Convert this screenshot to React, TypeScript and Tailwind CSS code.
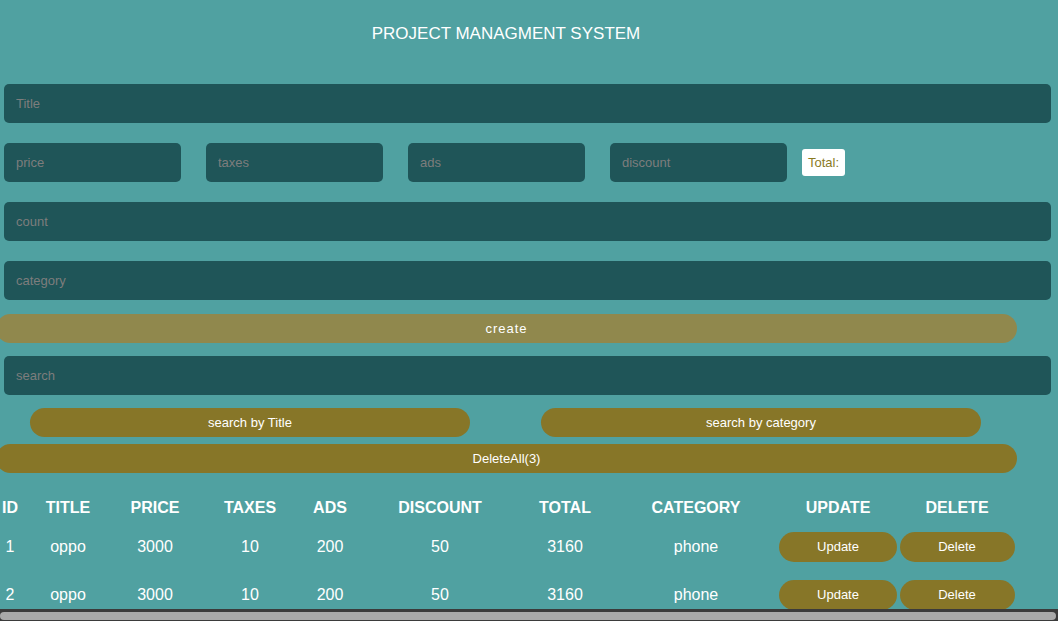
import React from "react";

const rows = [
  { id: 1, title: "oppo", price: 3000, taxes: 10, ads: 200, discount: 50, total: 3160, category: "phone" },
  { id: 2, title: "oppo", price: 3000, taxes: 10, ads: 200, discount: 50, total: 3160, category: "phone" },
];

const cols = "grid grid-cols-[20px_96px_78px_112px_48px_172px_88px_164px_120px_118px] items-center text-center";

function Field({ placeholder, className = "" }: { placeholder: string; className?: string }) {
  return (
    <input
      placeholder={placeholder}
      className={`h-[39px] rounded-[5px] bg-[#1f5558] px-3 text-[13px] text-white placeholder:text-[#7d7d7d] outline-none ${className}`}
    />
  );
}

export default function App() {
  return (
    <div className="h-[621px] w-[1058px] overflow-hidden bg-[#50a1a1] flex flex-col font-['Liberation_Sans',Arial,sans-serif]">
      <div className="flex-1 overflow-hidden">
        {/* Header */}
        <div className="w-[1012px] h-[66px] pt-[2px] flex items-center justify-center">
          <h2 className="text-[17px] text-white">PROJECT MANAGMENT SYSTEM</h2>
        </div>

        {/* Inputs */}
        <div className="pl-[4px] pr-[7px] mt-[18px] flex flex-col gap-[20px]">
          <Field placeholder="Title" className="w-full" />
          <div className="flex items-center gap-[25px]">
            <Field placeholder="price" className="w-[177px]" />
            <Field placeholder="taxes" className="w-[177px]" />
            <Field placeholder="ads" className="w-[177px]" />
            <div className="flex items-center gap-[15px]">
              <Field placeholder="discount" className="w-[177px]" />
              <span className="h-[27px] px-[6px] rounded-[3px] bg-white text-[13px] text-[#8a7a1f] flex items-center">Total:</span>
            </div>
          </div>
          <Field placeholder="count" className="w-full" />
          <Field placeholder="category" className="w-full" />
        </div>

        <button className="mt-[14px] ml-[-4px] w-[1021px] h-[29px] rounded-full bg-[#90884d] text-white text-[13px] tracking-[1px]">
          create
        </button>

        <div className="pl-[4px] pr-[7px] mt-[13px]">
          <Field placeholder="search" className="w-full" />
        </div>

        <div className="mt-[13px] flex gap-[71px] pl-[30px]">
          <button className="w-[440px] h-[29px] rounded-full bg-[#877628] text-white text-[13px]">search by Title</button>
          <button className="w-[440px] h-[29px] rounded-full bg-[#877628] text-white text-[13px]">search by category</button>
        </div>

        <button className="mt-[7px] ml-[-4px] w-[1021px] h-[29px] rounded-full bg-[#877628] text-white text-[13px]">
          DeleteAll(3)
        </button>

        {/* Table */}
        <div className="mt-[22px] text-white text-[16px]">
          <div className={`${cols} h-[26px] font-bold`}>
            <span>ID</span>
            <span>TITLE</span>
            <span>PRICE</span>
            <span>TAXES</span>
            <span>ADS</span>
            <span>DISCOUNT</span>
            <span className="pr-[10px]">TOTAL</span>
            <span>CATEGORY</span>
            <span>UPDATE</span>
            <span>DELETE</span>
          </div>
          <div className="mt-[11px] flex flex-col gap-[18px]">
            {rows.map((r) => (
              <div key={r.id} className={`${cols} h-[30px]`}>
                <span>{r.id}</span>
                <span>{r.title}</span>
                <span>{r.price}</span>
                <span>{r.taxes}</span>
                <span>{r.ads}</span>
                <span>{r.discount}</span>
                <span className="pr-[10px]">{r.total}</span>
                <span>{r.category}</span>
                <span className="flex justify-center">
                  <button className="w-[118px] h-[30px] rounded-full bg-[#877628] text-white text-[13px]">Update</button>
                </span>
                <span className="flex justify-center">
                  <button className="w-[115px] h-[30px] rounded-full bg-[#877628] text-white text-[13px]">Delete</button>
                </span>
              </div>
            ))}
          </div>
        </div>
      </div>

      {/* Horizontal scrollbar */}
      <div className="h-[12px] bg-[#3b3b3b] pt-[3px] pb-[1px] pr-[2px]">
        <div className="h-full rounded-full bg-[#a9a9a9]" />
      </div>
    </div>
  );
}
